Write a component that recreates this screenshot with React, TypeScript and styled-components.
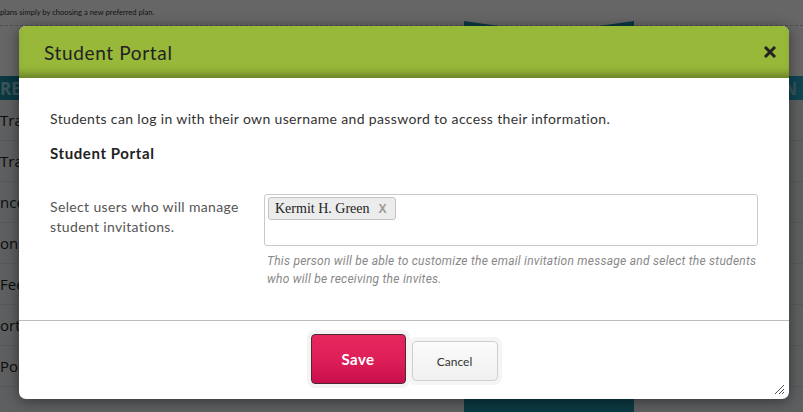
import styled, { createGlobalStyle } from "styled-components";

const GlobalStyle = createGlobalStyle`
  html, body {
    margin: 0;
    padding: 0;
    width: 803px;
    height: 412px;
    overflow: hidden;
    background: #ffffff;
    font-family: Lato, "Open Sans", sans-serif;
  }
  * {
    box-sizing: border-box;
  }
`;

const Page = styled.div`
  position: relative;
  width: 803px;
  height: 412px;
  overflow: hidden;
  background: #ffffff;
`;

const Notice = styled.div`
  height: 26px;
  padding: 7px 0 0 0;
  font-size: 7.6px;
  color: #333;
  border-bottom: 1px dashed #c8c8c8;
  font-family: Lato, sans-serif;
`;

const TealBar = styled.div`
  margin-top: 50px;
  height: 24px;
  background: linear-gradient(90deg, #1d8aa3 0%, #23acc8 100%);
  display: flex;
  align-items: center;
  justify-content: space-between;
  padding: 0 6px 0 0;
  color: #8fd0dd;
  font-size: 17px;
  font-weight: 700;
  font-family: "Open Sans", sans-serif;
`;

const SideList = styled.ul`
  list-style: none;
  margin: 0;
  padding: 0;
  width: 803px;
`;

const SideRow = styled.li`
  height: 41px;
  display: flex;
  align-items: center;
  font-size: 15px;
  color: #222;
  background: #e8eef0;
  border-bottom: 1px solid #d5dde0;
  font-family: "Open Sans", sans-serif;
`;

const RibbonCard = styled.div`
  position: absolute;
  left: 464px;
  top: 21px;
  width: 170px;
  height: 420px;
  background: #1f8ea6;
  clip-path: polygon(0 0, 50% 12px, 100% 0, 100% 100%, 0 100%);
`;

const Overlay = styled.div`
  position: absolute;
  inset: 0;
  background: rgba(0, 0, 0, 0.6);
`;

const Dialog = styled.div`
  position: absolute;
  left: 19px;
  top: 26px;
  width: 770px;
  height: 373px;
  background: #ffffff;
  border-radius: 7px;
  box-shadow: 0 2px 14px rgba(0, 0, 0, 0.45);
  display: flex;
  flex-direction: column;
  overflow: hidden;
`;

const Header = styled.div`
  height: 52px;
  flex: none;
  background: #98b83a;
  box-shadow: inset 0 -9px 9px -5px rgba(40, 50, 10, 0.45);
  display: flex;
  align-items: center;
  justify-content: space-between;
  padding: 0 13px 0 25px;
`;

const Title = styled.h2`
  margin: 0;
  font-size: 19px;
  font-weight: 400;
  color: #222;
  letter-spacing: 0.65px;
`;

const CloseButton = styled.button`
  border: none;
  background: none;
  padding: 0;
  width: 12px;
  height: 12px;
  display: flex;
  cursor: pointer;
`;

const Body = styled.div`
  flex: 1;
  padding: 31px 31px 0 31px;
  border-bottom: 1px solid #bcbcbc;
  letter-spacing: 0.35px;
`;

const Intro = styled.p`
  margin: 0;
  font-size: 14px;
  line-height: 20px;
  color: #333;
`;

const SectionTitle = styled.h3`
  margin: 14px 0 0 0;
  font-size: 15px;
  line-height: 20px;
  font-weight: 700;
  color: #222;
  letter-spacing: 0.6px;
`;

const FormRow = styled.div`
  margin-top: 31px;
  display: grid;
  grid-template-columns: 214px 1fr;
`;

const Label = styled.label`
  padding-top: 3px;
  font-size: 14px;
  line-height: 20px;
  color: #555;
`;

const Field = styled.div`
  display: flex;
  flex-direction: column;
`;

const TagInput = styled.div`
  height: 52px;
  border: 1px solid #c9c9c9;
  border-radius: 3px;
  padding: 2px 3px;
  display: flex;
  align-items: flex-start;
  gap: 4px;
  letter-spacing: 0;
`;

const Tag = styled.span`
  display: inline-flex;
  align-items: center;
  height: 23px;
  padding: 0 9px 0 6px;
  background: #ececec;
  border: 1px solid #c4c4c4;
  border-radius: 3px;
  font-family: "Liberation Serif", serif;
  font-size: 14px;
  color: #222;
  gap: 9px;
`;

const TagRemove = styled.span`
  font-family: "Liberation Sans", sans-serif;
  font-weight: 700;
  font-size: 12px;
  color: #9a9a9a;
`;

const Help = styled.p`
  margin: 6px 0 0 3px;
  font-family: Roboto, sans-serif;
  font-size: 12px;
  line-height: 18px;
  font-style: italic;
  color: #888;
  letter-spacing: 0.25px;
`;

const Footer = styled.div`
  height: 78px;
  flex: none;
  position: relative;
  display: flex;
  align-items: center;
  justify-content: center;
  gap: 6px;
  padding-bottom: 2px;
`;

const SaveButton = styled.button`
  width: 95px;
  height: 50px;
  border: 1px solid #4a2a33;
  border-radius: 4px;
  background: linear-gradient(180deg, #e6275e 0%, #df1f58 50%, #c80f4c 100%);
  box-shadow: 0 0 0 4px #f3f3f3;
  color: #fff;
  font-family: Lato, sans-serif;
  font-weight: 700;
  font-size: 15px;
  letter-spacing: 0.4px;
  cursor: pointer;
`;

const CancelButton = styled.button`
  width: 86px;
  height: 40px;
  margin-top: 4px;
  border: 1px solid #cfcfcf;
  border-radius: 4px;
  background: linear-gradient(180deg, #fbfbfb 0%, #f0f0f0 100%);
  box-shadow: 0 0 0 4px #f5f5f5;
  color: #333;
  font-family: Lato, sans-serif;
  font-size: 12px;
  cursor: pointer;
`;

const Grip = styled.svg`
  position: absolute;
  right: 4px;
  bottom: 4px;
`;

const sideItems = ["Tra", "Tra", "nce", "ons", "Fees", "orta", "Por", ""];

export default function App() {
  return (
    <>
      <GlobalStyle />
      <Page>
        <Notice>plans simply by choosing a new preferred plan.</Notice>
        <TealBar>
          <span>RE</span>
          <span>N</span>
        </TealBar>
        <SideList>
          {sideItems.map((s, i) => (
            <SideRow key={i}>{s}</SideRow>
          ))}
        </SideList>
        <RibbonCard />
        <Overlay />
        <Dialog>
          <Header>
            <Title>Student Portal</Title>
            <CloseButton aria-label="Close">
              <svg width="12" height="12" viewBox="0 0 12 12">
                <path d="M2 2 L10 10 M10 2 L2 10" stroke="#222" strokeWidth="3" strokeLinecap="square" />
              </svg>
            </CloseButton>
          </Header>
          <Body>
            <Intro>
              Students can log in with their own username and password to access their information.
            </Intro>
            <SectionTitle>Student Portal</SectionTitle>
            <FormRow>
              <Label>
                Select users who will manage
                <br />
                student invitations.
              </Label>
              <Field>
                <TagInput>
                  <Tag>
                    Kermit H. Green <TagRemove>X</TagRemove>
                  </Tag>
                </TagInput>
                <Help>
                  This person will be able to customize the email invitation message and select the students
                  <br />
                  who will be receiving the invites.
                </Help>
              </Field>
            </FormRow>
          </Body>
          <Footer>
            <SaveButton>Save</SaveButton>
            <CancelButton>Cancel</CancelButton>
            <Grip width="12" height="12" viewBox="0 0 12 12">
              <path d="M11 2 L2 11 M11 6 L6 11 M11 9 L9 11" stroke="#555" strokeWidth="1" />
            </Grip>
          </Footer>
        </Dialog>
      </Page>
    </>
  );
}
